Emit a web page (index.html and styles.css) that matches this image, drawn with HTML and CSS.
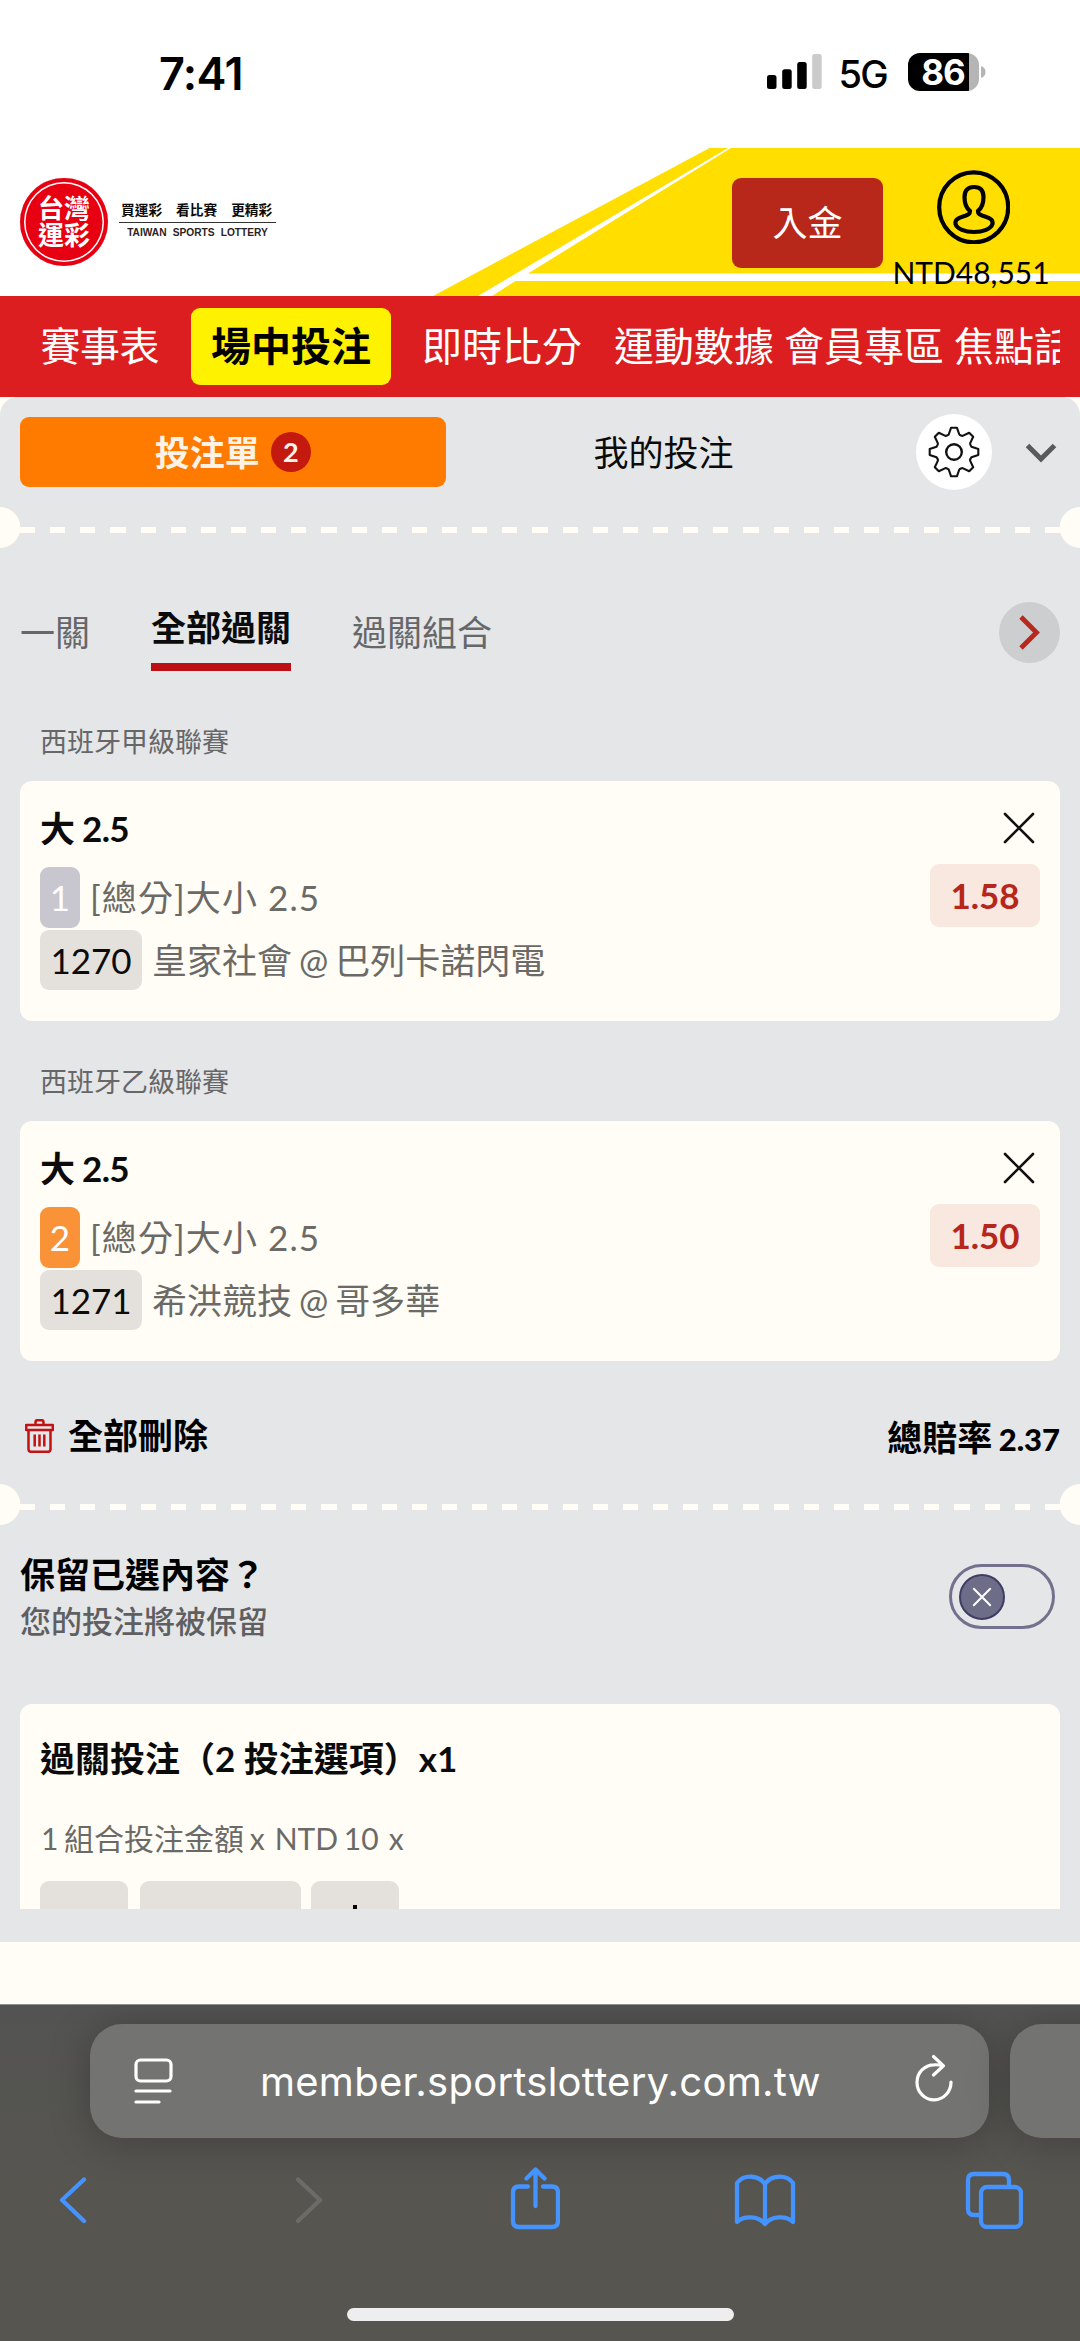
FILE: index.html
```html
<!DOCTYPE html>
<html lang="zh-Hant">
<head>
<meta charset="utf-8">
<title>台灣運彩</title>
<link rel="stylesheet" href="styles.css">
</head>
<body>
<div class="status">
  <span class="time">7:41</span>
  <span class="status-right">
    <svg class="signal" width="52" height="36" viewBox="0 0 52 36"><rect x="0" y="21" width="9.5" height="14" rx="2.5"/><rect x="15.2" y="15.3" width="9.5" height="19.7" rx="2.5"/><rect x="30.2" y="8" width="9.5" height="27" rx="2.5"/><rect x="45.2" y="0" width="9.5" height="35" rx="2.5" fill="#cbcbcb"/></svg>
    <span class="net">5G</span>
    <span class="battery"><span class="level">86</span></span>
    <svg width="5" height="12" viewBox="0 0 5 12"><path d="M0 0C6 1.500 6 10.500 0 12Z" fill="#b5b5b5"/></svg>
  </span>
</div>

<header class="header">
  <svg class="stripes" width="1080" height="148" viewBox="0 0 1080 148"><path d="M709.500 0H1080V148H433Z" fill="#ffde00"/><path d="M728 0H731L528 125.500H1080V133H515.500L492 148H478Z" fill="#fff"/></svg>
  <div class="logo">
    <div class="seal"><span>台灣</span><span>運彩</span></div>
    <div class="tagline">
      <div class="zh"><span>買運彩</span><span>看比賽</span><span>更精彩</span></div>
      <div class="en">TAIWAN SPORTS LOTTERY</div>
    </div>
  </div>
  <div class="deposit">入金</div>
  <div class="account">
    <svg width="73" height="74" viewBox="0 0 73 74" fill="none" stroke="#000" stroke-width="4.200"><ellipse cx="36.700" cy="37.300" rx="34.500" ry="35"/><path d="M33 41C29 38 27.500 33 27.500 27C27.500 20 31 17 37 17C43 17 46.500 20 46.500 27C46.500 33 45 38 41 41C41 44 42 44.500 48 46.500C54 48.500 56 50 55.500 54C54 59 46 62 37 62C28 62 20 59 18.500 54C18 50 20 48.500 26 46.500C32 44.500 33 44 33 41Z"/></svg>
    <span class="balance">NTD48,551</span>
  </div>
</header>

<nav class="nav">
  <div class="nav-scroll">
    <span class="n1">賽事表</span><span class="current">場中投注</span><span>即時比分</span><span class="n4">運動數據</span><span class="n5">會員專區</span><span class="n5">焦點話題</span>
  </div>
</nav>

<main class="slip-wrap">
<section class="slip">
  <div class="slip-tabs">
    <div class="tab-on">投注單<span class="count">2</span></div>
    <div class="tab-off">我的投注</div>
    <div class="gear"><svg width="54" height="54" viewBox="-27 -27 54 54" fill="none" stroke="#111" stroke-width="2.100" stroke-linejoin="round"><path d="M-5.300-17.500L-2.900-24.300H2.900L5.300-17.500Q7-16 8.600-16.100L15.200-19.200 19.200-15.200 16.100-8.600Q16-7 17.500-5.300L24.300-2.900V2.900L17.500 5.300Q16 7 16.100 8.600L19.200 15.200 15.200 19.200 8.600 16.100Q7 16 5.300 17.500L2.900 24.300H-2.900L-5.300 17.500Q-7 16-8.600 16.100L-15.200 19.200-19.200 15.200-16.100 8.600Q-16 7-17.500 5.300L-24.300 2.900V-2.900L-17.500-5.300Q-16-7-16.100-8.600L-19.200-15.200-15.200-19.200-8.600-16.100Q-7-16-5.300-17.500Z"/><circle r="7.800" stroke-width="2.400"/></svg></div>
    <svg class="collapse" width="32" height="20" viewBox="0 0 32 20" fill="none" stroke="#595a5a" stroke-width="5"><path d="M2.500 2.500L16 16L29.500 2.500"/></svg>
  </div>

  <div class="tear"></div>

  <div class="modes">
    <span class="m1">一關</span><span class="m2">全部過關</span><span class="m3">過關組合</span>
    <span class="next"><svg width="24" height="36" viewBox="0 0 24 36" fill="none" stroke="#b8281c" stroke-width="4.800"><path d="M3 3L18.500 18.500L3 34"/></svg></span>
  </div>

  <div class="league">西班牙甲級聯賽</div>
  <article class="card">
    <div class="info">
      <div class="pick">大 2.5</div>
      <div class="line"><span class="idx">1</span><span class="market">[總分]大小 2.5</span></div>
      <div class="line"><span class="code">1270</span><span class="teams">皇家社會 @ 巴列卡諾閃電</span></div>
    </div>
    <div class="side">
      <svg class="close" width="32" height="32" viewBox="0 0 32 32" stroke="#111" stroke-width="2.600" stroke-linecap="round"><path d="M2 2L30 30M30 2L2 30"/></svg>
      <span class="odds">1.58</span>
    </div>
  </article>

  <div class="league">西班牙乙級聯賽</div>
  <article class="card">
    <div class="info">
      <div class="pick">大 2.5</div>
      <div class="line"><span class="idx hot">2</span><span class="market">[總分]大小 2.5</span></div>
      <div class="line"><span class="code">1271</span><span class="teams">希洪競技 @ 哥多華</span></div>
    </div>
    <div class="side">
      <svg class="close" width="32" height="32" viewBox="0 0 32 32" stroke="#111" stroke-width="2.600" stroke-linecap="round"><path d="M2 2L30 30M30 2L2 30"/></svg>
      <span class="odds">1.50</span>
    </div>
  </article>

  <div class="totals">
    <svg width="29" height="34" viewBox="0 0 29 34" fill="none" stroke="#c31212" stroke-width="2.500" stroke-linejoin="round"><path d="M1.200 6H27.800V11H1.200ZM10.500 5.500V3.500Q10.500 1.200 12.500 1.200H16.500Q18.500 1.200 18.500 3.500V5.500M3.500 11.500V30Q3.500 32.800 6 32.800H23Q25.500 32.800 25.500 30V11.500M9.700 15.500V27.500M14.500 15.500V27.500M19.300 15.500V27.500"/></svg>
    <span class="clear">全部刪除</span>
    <span class="total">總賠率 <b>2.37</b></span>
  </div>

  <div class="tear"></div>

  <div class="keep">
    <div><div class="keep-q">保留已選內容？</div><div class="keep-sub">您的投注將被保留</div></div>
    <span class="toggle"><span class="knob"><svg width="20" height="20" viewBox="0 0 20 20" stroke="#fff" stroke-width="2" stroke-linecap="round"><path d="M1.800 1.800L18.200 18.200M18.200 1.800L1.800 18.200"/></svg></span></span>
  </div>

  <div class="stake">
    <div class="stake-title">過關投注（2 投注選項）x1</div>
    <div class="stake-sub">1 組合投注金額 x<span>NTD 10</span><span>x</span></div>
    <div class="stepper"><span></span><span class="wide"></span><span><svg width="28" height="28" viewBox="0 0 28 28" stroke="#000" stroke-width="4"><path d="M14 0V28M0 14H28"/></svg></span></div>
  </div>
</section>
</main>

<footer class="browser">
  <div class="address-row">
    <div class="address">
      <svg class="reader" width="40" height="48" viewBox="0 0 40 48" fill="none" stroke="#fff" stroke-width="3.200" stroke-linecap="round"><rect x="2" y="2" width="35" height="21" rx="4.500"/><path d="M2 33H36M2 44H25"/></svg>
      <span class="url">member.sportslottery.com.tw</span>
      <svg class="reload" width="42" height="50" viewBox="0 0 42 50" fill="none" stroke="#fff" stroke-width="3.200" stroke-linecap="round" stroke-linejoin="round"><path d="M38 28A17 17.500 0 1 1 21 10.800Q25 10.500 30 11.700M20.500 2.500L30.500 11.800L20.500 21"/></svg>
    </div>
    <div class="address peek"></div>
  </div>
  <div class="tools">
    <svg class="back" width="30" height="48" viewBox="0 0 30 48"><path d="M26 3.500L4 24L26 45"/></svg>
    <svg class="fwd" width="30" height="48" viewBox="0 0 30 48"><path d="M4 3.500L26 24L4 45"/></svg>
    <svg class="share" width="50" height="64" viewBox="0 0 50 64"><path d="M18 20.500H9Q3 20.500 3 26.500V55Q3 61 9 61H42Q48 61 48 55V26.500Q48 20.500 42 20.500H33M25.500 40V4M16.500 12.500L25.500 3.500L34.500 12.500"/></svg>
    <svg class="book" width="62" height="54" viewBox="0 0 62 54"><path d="M31 11C25 2 10 1 3 10V49C10 42 25 43 31 51C37 43 52 42 59 49V10C52 1 37 2 31 11V51"/></svg>
    <svg class="tabs" width="58" height="58" viewBox="0 0 58 58"><path d="M15 44H9Q3 44 3 38V9Q3 3 9 3H38Q44 3 44 9V15"/><rect x="16" y="16" width="40" height="40" rx="6"/></svg>
  </div>
  <div class="home"></div>
</footer>
</body>
</html>
```
FILE: styles.css
```css
* { box-sizing: border-box; }
body {
  margin: 0;
  width: 1080px;
  height: 2341px;
  overflow: hidden;
  background: #fff;
  font-family: Lato, "Noto Sans CJK TC", sans-serif;
  color: #0b0b0b;
  font-size: 35px;
  line-height: 1;
  display: flex;
  flex-direction: column;
}
svg { display: block; flex: none; }
span, div { white-space: nowrap; }

/* status bar */
.status {
  height: 148px;
  padding: 0 94.5px 4px 159px;
  display: flex;
  justify-content: space-between;
  align-items: center;
  font-family: Inter, sans-serif;
  color: #000;
}
.time { font-size: 45px; font-weight: 600; letter-spacing: -0.6px; margin-top: 2px; }
.status-right { display: flex; align-items: center; height: 38px; }
.signal { overflow: visible; }
.net { font-size: 38px; font-weight: 500; letter-spacing: -1.8px; margin: 4px 21px 0 20px; width: 48px; }
.battery {
  width: 71px;
  height: 38px;
  border-radius: 12px;
  background: linear-gradient(to right, #000 61px, #b5b5b5 61px);
  margin-right: 2px;
}
.level { display: block; width: 71px; text-align: center; color: #fff; font-size: 35px; line-height: 38px; font-weight: 700; letter-spacing: -1px; }

/* brand header */
.header {
  position: relative;
  height: 148px;
  padding: 0 31px 0 20px;
  display: flex;
  align-items: flex-start;
}
.stripes { position: absolute; left: 0; top: 0; z-index: -1; }
.logo { flex: none; display: flex; margin-top: 30px; width: 712px; }
.seal {
  width: 88px;
  height: 88px;
  border-radius: 50%;
  background: #e60012;
  box-shadow: inset 0 0 0 4px #e60012, inset 0 0 0 5.500px #fff;
  color: #fff;
  font-weight: 700;
  font-size: 26px;
  line-height: 27px;
  display: flex;
  flex-direction: column;
  align-items: center;
  justify-content: center;
}
.tagline { margin: 23px 0 0 11px; width: 157px; }
.zh {
  display: flex;
  gap: 14px;
  padding-left: 2px;
  height: 22px;
  font-size: 13.700px;
  line-height: 17px;
  font-weight: 700;
  border-bottom: 1px solid #333;
}
.en { font: 700 10.200px/12px "Liberation Sans", sans-serif; word-spacing: 3.300px; text-align: center; margin-top: 4px; color: #2b2323; }
.deposit {
  flex: none;
  width: 151px;
  height: 90px;
  margin-top: 30px;
  border-radius: 9px;
  background: #b7281b;
  color: #fff;
  text-align: center;
  line-height: 89px;
}
.account { flex: none; width: 156px; display: flex; flex-direction: column; align-items: center; margin: 22px 0 0 10px; }
.account svg { margin-left: 4px; }
.balance { font-size: 30px; line-height: 36px; margin-top: 10px; color: #000; }

/* main navigation */
.nav { height: 101px; background: #dc1e20; padding: 0 20px; }
.nav-scroll {
  height: 101px;
  padding: 0 0 1px 20.500px;
  display: flex;
  align-items: center;
  overflow: hidden;
  color: #fff;
  font-size: 40px;
}
.nav-scroll span { flex: none; }
.nav-scroll .n1 { letter-spacing: -0.5px; }
.nav-scroll .current {
  margin: 0 31px 0 32px;
  padding: 0 20px;
  border-radius: 9px;
  background: #fff200;
  color: #000;
  font-weight: 700;
  line-height: 77px;
}
.nav-scroll .n4 { margin-left: 32px; }
.nav-scroll .n5 { margin-left: 10px; }

/* bet slip */
.slip-wrap { background: #fffdf5; height: 1607px; }
.slip { height: 1545px; background: #e4e6e8; border-radius: 18px 18px 0 0; overflow: hidden; }
.slip-tabs { height: 110px; padding-left: 20px; display: flex; align-items: center; }
.tab-on {
  width: 425.500px;
  height: 70px;
  border-radius: 9px;
  background: #ff7b00;
  color: #fff3e8;
  font-weight: 700;
  display: flex;
  align-items: center;
  justify-content: center;
}
.count {
  width: 40px;
  height: 40px;
  border-radius: 50%;
  margin-left: 11px;
  background: #c4190f;
  font-size: 27px;
  line-height: 40px;
  text-align: center;
}
.tab-off { width: 470px; padding-left: 148px; }
.gear {
  width: 76px;
  height: 76px;
  border-radius: 50%;
  background: #fff;
  display: flex;
  align-items: center;
  justify-content: center;
}
.collapse { margin: 2px 0 0 33px; }
.tear {
  height: 41px;
  background:
    radial-gradient(circle at 0 20.500px, #fffdf5 20px, transparent 20.700px),
    radial-gradient(circle at 100% 20.500px, #fffdf5 20px, transparent 20.700px),
    repeating-linear-gradient(to right, #fffdf5 0 15.070px, transparent 15.070px 30.145px) 20px 20px / 1040px 6px no-repeat;
}
.modes {
  height: 158px;
  padding: 10px 20px 0;
  display: flex;
  align-items: center;
  color: #666769;
}
.m2 { margin: 0 61px 2px 61px; border-bottom: 8px solid #bd1015; color: #0b0b0b; font-weight: 700; line-height: 71px; }
.next {
  width: 61px;
  height: 61px;
  border-radius: 50%;
  background: #cdced0;
  margin-left: auto;
  display: flex;
  align-items: center;
  justify-content: center;
}
.league { height: 75px; padding: 21px 0 0 40px; font-size: 27px; line-height: 30px; color: #666769; }
.card {
  height: 240px;
  margin: 0 20px 25px;
  padding: 30px 20px 0;
  border-radius: 12px;
  background: #fffdf5;
  display: flex;
  justify-content: space-between;
}
.pick { height: 56px; line-height: 34px; font-weight: 700; letter-spacing: -0.7px; }
.line { display: flex; gap: 10px; height: 63px; line-height: 61px; color: #6b6a67; }
.idx { width: 40px; height: 61px; border-radius: 9px; background: #c8c6ce; color: #fff; text-align: center; }
.hot { background: #fa9337; }
.market { letter-spacing: 1.100px; }
.code { width: 102px; height: 60px; border-radius: 9px; background: #e4e1dc; color: #0b0b0b; text-align: center; }
.teams { word-spacing: -2px; }
.side { display: flex; flex-direction: column; align-items: flex-end; }
.close { margin: 1px 5px 20px 0; }
.odds {
  width: 110px;
  height: 63px;
  border-radius: 9px;
  background: #f8e8e0;
  color: #b7261a;
  font-weight: 700;
  text-align: center;
  line-height: 62px;
}
.totals { height: 98px; padding: 1px 20px 0 25px; display: flex; align-items: center; font-weight: 700; color: #000; }
.clear { margin-left: 14px; }
.total { margin-left: auto; padding-top: 3px; word-spacing: -2px; }
.total b { font-size: 31px; }
.keep {
  height: 179px;
  padding: 29px 25px 0 20px;
  display: flex;
  justify-content: space-between;
}
.keep-q { font-weight: 700; line-height: 40px; color: #000; }
.keep-sub { font-size: 31px; line-height: 54px; color: #5f5f61; font-weight: 500; }
.toggle { width: 106px; height: 65px; border-radius: 33px; border: 3px solid #74708e; margin-top: 10px; padding: 7px; }
.knob { display: flex; align-items: center; justify-content: center; width: 46px; height: 46px; border-radius: 50%; background: #6e6d88; border: 2px solid #3f3d63; }
.stake {
  height: 205px;
  margin: 0 20px;
  padding: 34px 20px 0;
  border-radius: 12px 12px 0 0;
  background: #fffdf5;
  overflow: hidden;
}
.stake-title { font-weight: 700; line-height: 40px; }
.stake-sub { display: flex; gap: 10px; padding-left: 1px; font-size: 30px; line-height: 40px; margin-top: 40px; color: #6b6a67; word-spacing: -2px; }
.stepper { display: flex; margin-top: 23px; }
.stepper span { width: 88px; height: 75px; border-radius: 9px; background: #e4e1dc; display: flex; align-items: center; justify-content: center; }
.stepper .wide { width: 161px; margin: 0 10px 0 12px; }

/* browser chrome */
.browser { height: 337px; background: linear-gradient(#535353, #565550 50%); border-top: 1px solid #8f8f8c; overflow: hidden; }
.address-row { display: flex; gap: 21px; padding: 19px 0 0 90px; }
.address {
  flex: none;
  width: 899px;
  height: 114px;
  border-radius: 32px;
  background: #737371;
  box-shadow: 0 4px 40px rgba(0, 0, 0, 0.25);
  display: flex;
  align-items: center;
  padding: 0 34px 0 44px;
  color: #fff;
}
.reader { margin-top: 2px; }
.url { font: 400 40px/48px Inter, sans-serif; letter-spacing: 0.250px; width: 564px; margin-left: 86px; padding-top: 2px; }
.reload { margin-left: auto; margin-bottom: 4px; }
.tools { display: flex; align-items: center; height: 123px; padding-left: 58px; fill: none; stroke: #4593ff; stroke-width: 4.300; stroke-linecap: round; stroke-linejoin: round; }
.fwd { stroke: #6c6b68; margin-left: 205.500px; }
.share { margin: 0 174px 4px 186.500px; }
.tabs { margin-left: 169px; }
.home { width: 387px; height: 13px; margin: 47px auto 0; border-radius: 7px; background: #eee; }
```
